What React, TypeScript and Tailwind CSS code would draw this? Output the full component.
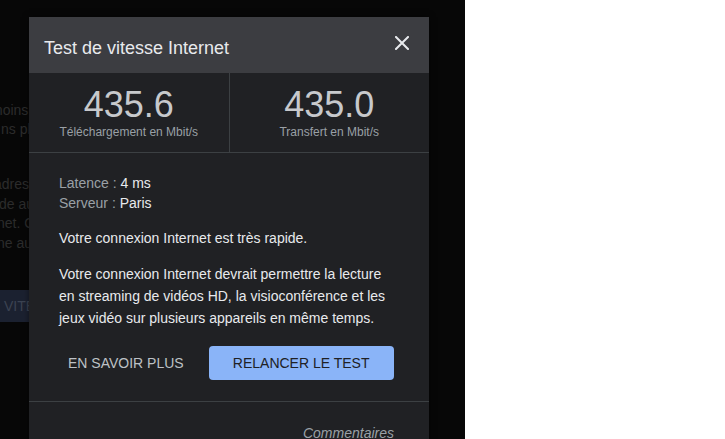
import React from 'react';

// Faded page content sitting behind the dark scrim
const BackgroundPage = () => (
  <div className="pt-[101px] text-[14px] leading-[19px] text-[#2c2c2c]">
    <p className="ml-[-9px] whitespace-nowrap">moins une fois</p>
    <p className="ml-[1px] whitespace-nowrap">ns plus rapide</p>
    <div className="mt-[36px] leading-[19.5px]">
      <p className="ml-[-6px] whitespace-nowrap">adresse IP</p>
      <p className="ml-[-1px] whitespace-nowrap">de aucun</p>
      <p className="ml-[-3px] whitespace-nowrap">net. Cette</p>
      <p className="ml-[-3px] whitespace-nowrap">ne aucun</p>
    </div>
    <div className="mt-[37px] flex h-[32px] w-[60px] items-center bg-[#1b2130] pl-[4px] text-[#3b4352]">
      VITESSE
    </div>
  </div>
);

const CloseIcon = () => (
  <svg width="14" height="14" viewBox="0 0 14 14" fill="none" stroke="#e8eaed" strokeWidth="2" strokeLinecap="square">
    <path d="M1 1 L13 13 M13 1 L1 13" />
  </svg>
);

const stats = [
  { value: '435.6', label: 'Téléchargement en Mbit/s' },
  { value: '435.0', label: 'Transfert en Mbit/s' },
];

const SpeedTestDialog = () => (
  <div className="absolute left-[29px] top-[17px] w-[400px] bg-[#202124] shadow-[0_0_6px_rgba(0,0,0,0.5)]">
    <div className="flex h-[56px] items-center justify-between bg-[#3c3d41] pl-[15px] pr-[20px]">
      <h2 className="mt-[7px] text-[18px] text-[#e8eaed]">Test de vitesse Internet</h2>
      <button className="mt-[-5px]">
        <CloseIcon />
      </button>
    </div>

    <div className="flex h-[80px] border-b border-[#3c4043]">
      {stats.map((s, i) => (
        <div
          key={s.label}
          className={`flex flex-1 flex-col items-center pt-[12px] ${i === 0 ? 'border-r border-[#3c4043]' : ''}`}
        >
          <span className="text-[36px] leading-[40px] text-[#c7c9cc]">{s.value}</span>
          <span className="text-[12px] leading-[14px] text-[#9aa0a6]">{s.label}</span>
        </div>
      ))}
    </div>

    <div className="border-b border-[#3c4043] px-[30px] pb-[21px] pt-[20px] text-[14px] text-[#e8eaed]">
      <div className="leading-[20px]">
        <p>
          <span className="text-[#9aa0a6]">Latence : </span>4 ms
        </p>
        <p>
          <span className="text-[#9aa0a6]">Serveur : </span>Paris
        </p>
      </div>
      <p className="mt-[15px] leading-[20px]">Votre connexion Internet est très rapide.</p>
      <p className="mt-[15px] max-w-[332px] leading-[22px]">
        Votre connexion Internet devrait permettre la lecture en streaming de vidéos HD, la visioconférence et les
        jeux vidéo sur plusieurs appareils en même temps.
      </p>
      <div className="mt-[17px] flex items-center">
        <button className="h-[34px] px-[9px] text-[14px] text-[#bdc1c6]">EN SAVOIR PLUS</button>
        <button className="ml-[16px] h-[34px] w-[185px] rounded-[4px] bg-[#8ab4f8] text-[14px] text-[#202124]">
          RELANCER LE TEST
        </button>
      </div>
    </div>

    <div className="flex justify-end pb-[20px] pr-[35px] pt-[21px]">
      <span className="text-[14px] italic leading-[20px] text-[#9aa0a6]">Commentaires</span>
    </div>
  </div>
);

export default function App() {
  return (
    <div className="flex h-[439px] w-[725px] overflow-hidden font-['Liberation_Sans',Arial,sans-serif]">
      <div className="relative h-full w-[465px] overflow-hidden bg-[#070707]">
        <BackgroundPage />
        <SpeedTestDialog />
      </div>
      <div className="flex-1 bg-white" />
    </div>
  );
}
